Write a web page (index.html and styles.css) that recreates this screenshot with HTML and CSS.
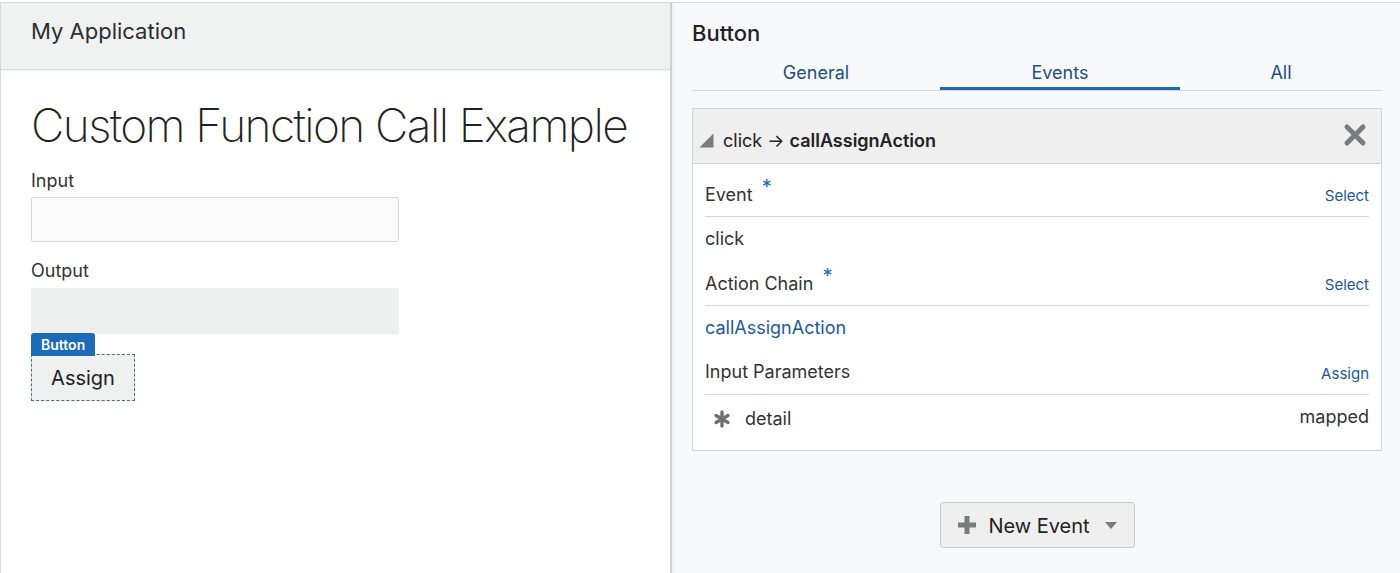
FILE: index.html
```html
<!DOCTYPE html>
<html>
<head>
<meta charset="utf-8">
<link rel="stylesheet" href="styles.css">
</head>
<body>
<div class="frame">
  <section class="app">
    <header class="app-header">My Application</header>
    <div class="app-body">
      <h1 class="page-title">Custom Function Call Example</h1>
      <label class="field-label first">Input</label>
      <div class="text-input"></div>
      <label class="field-label">Output</label>
      <div class="text-output"></div>
      <div class="selected-comp">
        <span class="comp-badge">Button</span>
        <div class="assign-btn">Assign</div>
      </div>
    </div>
  </section>
  <div class="divider"></div>
  <aside class="props">
    <h2 class="props-title">Button</h2>
    <nav class="tabs">
      <div class="tab">General</div>
      <div class="tab active">Events</div>
      <div class="tab">All</div>
    </nav>
    <div class="event-card">
      <div class="card-head">
        <svg class="tri" width="15" height="15" viewBox="0 0 15 15"><polygon points="14.5,0.5 14.5,14.5 0.5,14.5" fill="#7a7b7d"/></svg>
        <span class="head-text">click → <b>callAssignAction</b></span>
        <svg class="close" width="24" height="24" viewBox="0 0 24 24"><path d="M4 4 L20 20 M20 4 L4 20" stroke="#7b7c7e" stroke-width="5" stroke-linecap="round"/></svg>
      </div>
      <div class="card-body">
        <div class="row label-row"><span>Event <sup class="req">*</sup></span><a class="link">Select</a></div>
        <div class="row">click</div>
        <div class="row label-row"><span>Action Chain <sup class="req">*</sup></span><a class="link">Select</a></div>
        <div class="row blue">callAssignAction</div>
        <div class="row label-row"><span>Input Parameters</span><a class="link">Assign</a></div>
        <div class="row param-row">
          <span class="param"><svg class="star" width="18" height="18" viewBox="0 0 18 18"><g stroke="#6f7072" stroke-width="3.4" stroke-linecap="round"><path d="M9 2 V16"/><path d="M3 5.5 L15 12.5"/><path d="M15 5.5 L3 12.5"/></g></svg>detail</span>
          <span class="mapped">mapped</span>
        </div>
      </div>
    </div>
    <div class="new-wrap">
      <div class="new-btn">
        <svg width="22" height="22" viewBox="0 0 22 22"><path d="M11 2 V20 M2 11 H20" stroke="#7a7b7d" stroke-width="5"/></svg>
        <span>New Event</span>
        <svg class="caret" width="14" height="10" viewBox="0 0 14 10"><polygon points="1,2 13,2 7,9" fill="#7a7b7d"/></svg>
      </div>
    </div>
  </aside>
</div>
</body>
</html>
```
FILE: styles.css
```css
* { box-sizing: border-box; }
html, body { margin: 0; padding: 0; background: #fff; }
body {
  font-family: "Inter", "Roboto", "Liberation Sans", sans-serif;
  color: #2b2d30;
  width: 1400px;
  height: 573px;
  overflow: hidden;
}
.frame {
  margin-top: 2px;
  border-top: 1px solid #d9dadb;
  border-left: 1px solid #d9dadb;
  display: flex;
  height: 571px;
}
.app {
  width: 669px;
  background: #fff;
  display: flex;
  flex-direction: column;
}
.app-header {
  height: 67px;
  background: #f0f1f1;
  border-bottom: 1px dotted #c9cbcc;
  padding: 15px 0 0 30px;
  font-size: 22px;
  color: #2b2d30;
  box-shadow: 0 2px 2px rgba(0,0,0,0.04);
}
.app-body {
  padding: 28px 0 0 30px;
  display: flex;
  flex-direction: column;
  align-items: flex-start;
}
.page-title {
  margin: 0;
  font-weight: 200;
  font-size: 46px;
  line-height: 54px;
  letter-spacing: -1.6px;
  color: #222;
}
.field-label {
  font-size: 18px;
  line-height: 22px;
  margin-top: 18px;
  color: #333;
}
.text-input {
  margin-top: 5px;
  width: 368px;
  height: 45px;
  border: 1px solid #d8d9da;
  border-radius: 2px;
  background: #fbfbfb;
}
.text-output {
  margin-top: 6px;
  width: 368px;
  height: 46px;
  background: #eeefef;
  border-radius: 2px;
}
.selected-comp {
  margin-top: -1px;
  display: flex;
  flex-direction: column;
  align-items: flex-start;
}
.comp-badge {
  background: #1d6ab7;
  color: #fff;
  font-size: 14px;
  font-weight: 600;
  line-height: 23px;
  padding: 0 10px;
  border-radius: 3px 3px 0 0;
  margin-bottom: -2px;
  position: relative;
  z-index: 1;
}
.assign-btn {
  width: 104px;
  height: 47px;
  border: 1px dashed #3d6e9e;
  background: #eff0f0;
  font-size: 20px;
  display: flex;
  align-items: center;
  justify-content: center;
  color: #222;
}
.divider {
  width: 4px;
  background: #f2f3f3;
  border-left: 2px solid #cfd0d2;
}
.props {
  flex: 1;
  background: #f8f9fa;
  padding: 17px 18px 0 18px;
  display: flex;
  flex-direction: column;
}
.props-title {
  margin: 0;
  font-size: 22px;
  font-weight: 500;
  line-height: 26px;
  color: #222;
}
.tabs {
  display: flex;
  margin-top: 9px;
  border-bottom: 1px solid #d8d9da;
  height: 36px;
}
.tab {
  flex: 248;
  text-align: center;
  font-size: 18px;
  color: #1b4f86;
  line-height: 22px;
  padding-top: 7px;
}
.tab:nth-child(2) { flex: 240; }
.tab:nth-child(3) { flex: 202; }
.tab.active { border-bottom: 3px solid #1d6ab7; }
.event-card {
  margin-top: 17px;
  border: 1px solid #d3d4d5;
  background: #fff;
}
.card-head {
  height: 55px;
  background: #efefef;
  border-bottom: 1px solid #d3d4d5;
  display: flex;
  align-items: center;
  padding: 0 14px 0 6px;
  font-size: 18px;
  color: #222;
}
.tri { margin-top: 8px; }
.head-text { margin-left: 9px; flex: 1; padding-top: 8px; }
.head-text b { font-weight: 600; }
.close { margin-top: -2px; }
.card-body {
  padding: 8px 12px 11px 12px;
}
.row {
  height: 44.5px;
  display: flex;
  align-items: center;
  justify-content: space-between;
  font-size: 18px;
  color: #333;
}
.label-row { border-bottom: 1px solid #d3d4d5; }
.label-row .link { margin-top: 4px; }
.req {
  color: #1d6ab7;
  font-size: 20px;
  vertical-align: 0;
  position: relative;
  top: -7px;
  margin-left: 4px;
}
.link {
  color: #1b5a9a;
  font-size: 15px;
}
.blue { color: #1b5a9a; }
.param { display: flex; align-items: center; padding-top: 4px; }
.star { margin: 0 14px 0 8px; }
.mapped { margin-top: -1px; }
.new-wrap {
  display: flex;
  justify-content: center;
  margin-top: 51px;
}
.new-btn {
  width: 195px;
  height: 46px;
  background: #efefef;
  border: 1px solid #c9cacb;
  border-radius: 3px;
  display: flex;
  align-items: center;
  justify-content: center;
  gap: 10px;
  font-size: 20px;
  color: #222;
}
.new-btn span { padding-top: 2px; }
.new-btn .caret { margin-left: 4px; }
```
